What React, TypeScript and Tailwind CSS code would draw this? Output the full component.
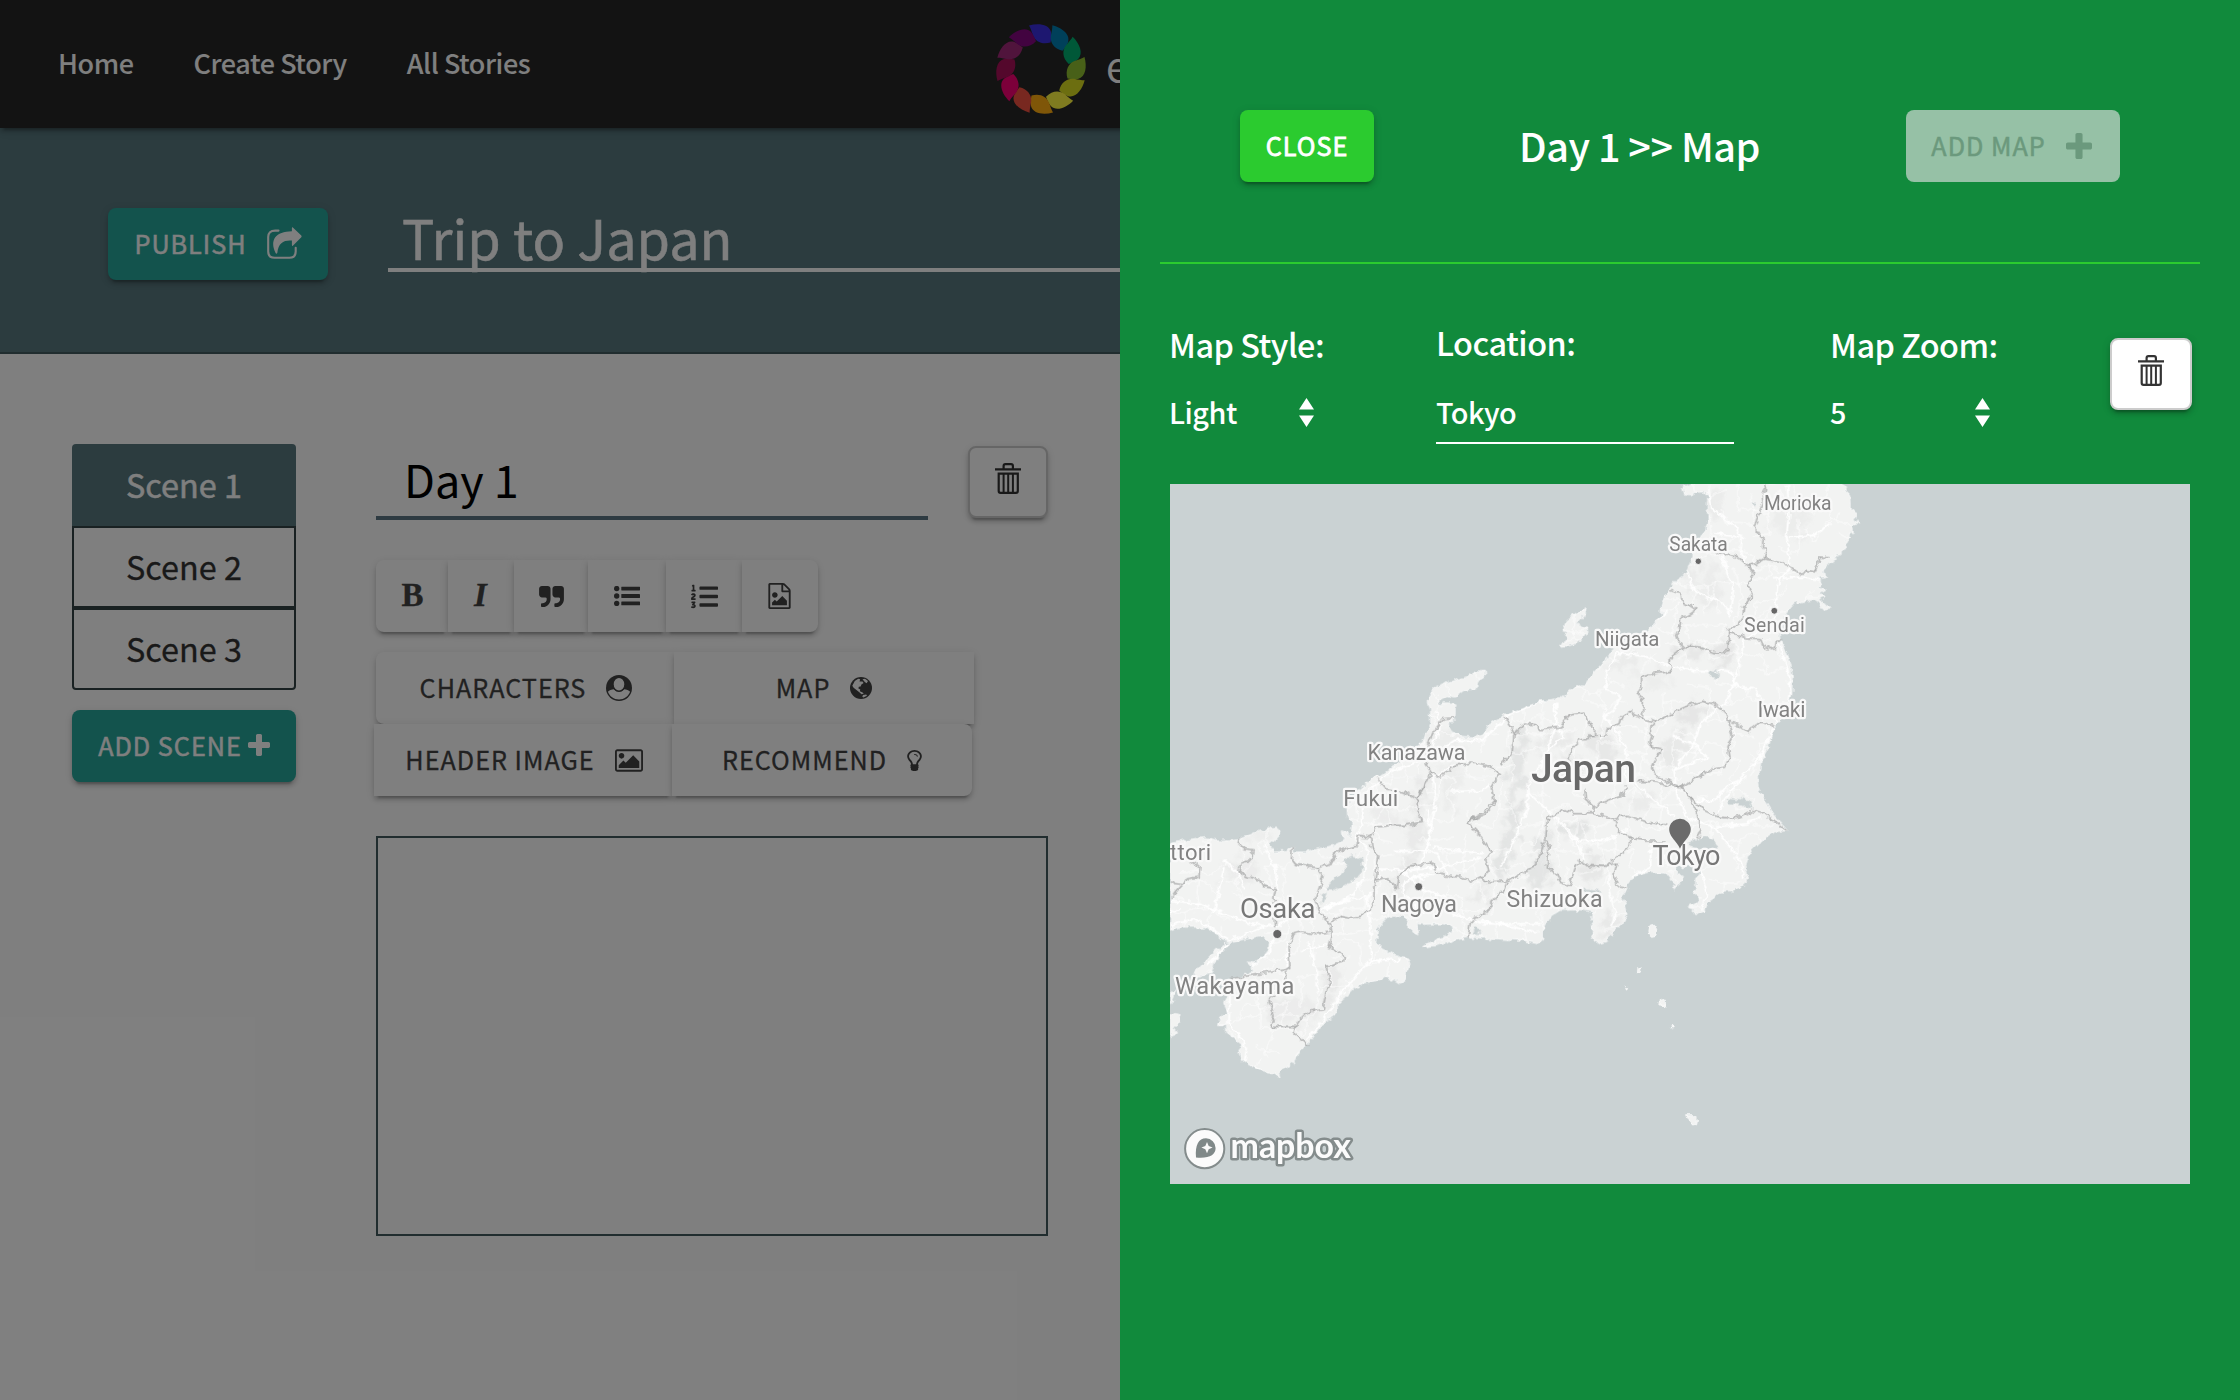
import React, { type ReactNode } from "react";
import { FaListOl } from "react-icons/fa";

/* ---------- icons ---------- */

type IconProps = { className?: string };

const ShareIcon = ({ className }: IconProps) => (
  <svg viewBox="0 0 35 32" className={className} fill="currentColor">
    <path d="M11.5 3.6H8.2Q1.2 3.6 1.2 10V24.6Q1.2 30.8 7.6 30.8H22.4Q28.7 30.8 28.7 24.6V20.8" fill="none" stroke="currentColor" strokeWidth="2.1" strokeLinecap="round" />
    <path d="M25.6.3 34.3 8.4Q35 9.3 34.3 10.2L25.6 18.9Q24.9 19 24.9 18V13.6C17 13 11.5 15.500 10.3 26Q9.300 27.400 8.600 26C2.500 13 8.500 4.600 24.900 4.300V1Q24.900 0 25.600 .3Z" />
  </svg>
);

const TrashIcon = ({ className }: IconProps) => (
  <svg viewBox="0 0 26 31" className={className} fill="none" stroke="currentColor" strokeWidth="2">
    <path d="M0 6.300H26M8.600 5.500V3Q8.600 1.200 10.400 1.200H16.100Q17.900 1.200 17.900 3V5.500" strokeWidth="2.200" />
    <path d="M3.700 10.700H22.800V28Q22.800 29.800 21 29.800H5.500Q3.700 29.800 3.700 28Z" strokeWidth="2.200" />
    <path d="M8.600 11V29.500M13.200 11V29.500M17.900 11V29.500" strokeWidth="2" />
  </svg>
);

const PlusIcon = ({ className }: IconProps) => (
  <svg viewBox="192 128 1408 1408" className={className} fill="currentColor">
    <path d="M1600 736v192q0 40-28 68t-68 28h-416v416q0 40-28 68t-68 28h-192q-40 0-68-28t-28-68v-416h-416q-40 0-68-28t-28-68v-192q0-40 28-68t68-28h416v-416q0-40 28-68t68-28h192q40 0 68 28t28 68v416h416q40 0 68 28t28 68z" />
  </svg>
);

const QuoteIcon = ({ className }: IconProps) => (
  <svg viewBox="64 128 1664 1408" className={className} fill="currentColor">
    <path d="M832 320v704q0 104-40.500 198.500t-109.500 163.500-163.500 109.500-198.500 40.500h-64q-26 0-45-19t-19-45v-128q0-26 19-45t45-19h64q106 0 181-75t75-181v-32q0-40-28-68t-68-28h-224q-80 0-136-56t-56-136v-384q0-80 56-136t136-56h384q80 0 136 56t56 136zm896 0v704q0 104-40.500 198.500t-109.500 163.500-163.500 109.500-198.500 40.500h-64q-26 0-45-19t-19-45v-128q0-26 19-45t45-19h64q106 0 181-75t75-181v-32q0-40-28-68t-68-28h-224q-80 0-136-56t-56-136v-384q0-80 56-136t136-56h384q80 0 136 56t56 136z" />
  </svg>
);

const ListIcon = ({ className }: IconProps) => (
  <svg viewBox="0 0 26 20" className={className} fill="currentColor">
    {[2.6, 10, 17.4].map((y) => (
      <g key={y}>
        <circle cx="2.7" cy={y} r="2.700" />
        <rect x="7.300" y={y - 1.9} width="18.700" height="3.800" rx=".4" />
      </g>
    ))}
  </svg>
);

const FileImageIcon = ({ className }: IconProps) => (
  <svg viewBox="128 0 1536 1792" className={className} fill="currentColor">
    <path d="M1596 380q28 28 48 76t20 88v1152q0 40-28 68t-68 28h-1344q-40 0-68-28t-28-68v-1600q0-40 28-68t68-28h896q40 0 88 20t76 48zm-444-244v376h376q-10-29-22-41l-313-313q-12-12-41-22zm384 1528v-1024h-416q-40 0-68-28t-28-68v-416h-768v1536h1280zm-128-448v320h-1024v-192l192-192 128 128 384-384zm-832-192q-80 0-136-56t-56-136 56-136 136-56 136 56 56 136-56 136-136 56z" />
  </svg>
);

const PictureIcon = ({ className }: IconProps) => (
  <svg viewBox="-64 128 1920 1536" className={className} fill="currentColor">
    <path d="M576 576q0 80-56 136t-136 56-136-56-56-136 56-136 136-56 136 56 56 136zm1024 384v448h-1408v-192l320-320 160 160 512-512zm96-704h-1600q-13 0-22.500 9.500t-9.500 22.500v1216q0 13 9.500 22.500t22.500 9.500h1600q13 0 22.500-9.500t9.500-22.500v-1216q0-13-9.500-22.500t-22.500-9.500zm160 32v1216q0 66-47 113t-113 47h-1600q-66 0-113-47t-47-113v-1216q0-66 47-113t113-47h1600q66 0 113 47t47 113z" />
  </svg>
);

const BulbIcon = ({ className }: IconProps) => (
  <svg viewBox="384 0 1024 1536" className={className} fill="currentColor">
    <path d="M1120 512q0 13-9.500 22.500t-22.500 9.500-22.500-9.500-9.500-22.500q0-46-54-71t-106-25q-13 0-22.500-9.500t-9.500-22.500 9.500-22.500 22.500-9.500q50 0 99.500 16t87 54 37.500 90zm160 0q0-72-34.500-134t-90-101.500-123-62-136.500-22.500-136.500 22.500-123 62-90 101.500-34.500 134q0 101 68 180 10 11 30.500 33t30.500 33q128 153 141 298h228q13-145 141-298 10-11 30.500-33t30.500-33q68-79 68-180zm128 0q0 155-103 268-45 49-74.500 87t-59.500 95.500-34 107.500q47 28 47 82 0 37-25 64 25 27 25 64 0 52-45 81 13 23 13 47 0 46-31.500 71t-77.500 25q-20 44-60 70t-87 26-87-26-60-70q-46 0-77.500-25t-31.500-71q0-24 13-47-45-29-45-81 0-37 25-64-25-27-25-64 0-54 47-82-4-50-34-107.500t-59.500-95.500-74.500-87q-103-113-103-268 0-99 44.500-184.500t117-142 164-89 186.500-32.500 186.500 32.500 164 89 117 142 44.500 184.500z" />
  </svg>
);

const PersonIcon = ({ className }: IconProps) => (
  <svg viewBox="0 0 26 26" className={className}>
    <circle cx="13" cy="13" r="13" fill="currentColor" />
    <path d="M1.900 16.800C3.200 15.200 5.500 14.500 8 14.200 10.500 17.200 15.500 17.200 18 14.200 20.500 14.500 22.800 15.200 24.100 16.800 22.600 21.300 18 24.500 13 24.500S3.400 21.300 1.900 16.800Z" fill="#fff" />
    <ellipse cx="13" cy="9.300" rx="6" ry="7" fill="#fff" stroke="currentColor" strokeWidth="1.400" />
  </svg>
);

const GlobeIcon = ({ className }: IconProps) => (
  <svg viewBox="0 0 22 22" className={className}>
    <circle cx="11" cy="11" r="11" fill="currentColor" />
    <path d="M4.800 3.900 8.200 1.700 10.200 2.300 9.500 4.400 12.500 4.500 13.600 5.900 11.400 7.600 10.600 9.400 8.800 9.700 8.400 11.600 10.300 12.600 9.800 14.200 12.200 15.300 13.800 16.600 11.600 17.300 9.600 15.400 6.800 13.300 3.600 10.700 2.300 8.800Z" fill="#fff" />
    <path d="M12.500 2.200 15 1.700 18 4 16.600 6.200 14.800 4.900ZM13 18 16.200 17.400 17 18.800 13.400 20.600 12.300 19.700Z" fill="#fff" />
  </svg>
);

const Arrows = () => (
  <svg viewBox="0 0 15 29" className="h-[29px] w-[15px]" fill="currentColor">
    <path d="M7.500 0 15 11.500H0ZM7.500 29 0 17.500H15Z" />
  </svg>
);

const PETALS = ["#3a2fe0", "#0080b4", "#00b070", "#90c030", "#d8dc20", "#fff640", "#ffac10", "#f05040", "#f80074", "#a81058", "#a02878", "#840680"];

const Logo = () => (
  <svg viewBox="-46 -46 92 92" className="h-[92px] w-[92px]">
    {PETALS.map((c, i) => (
      <path
        key={c}
        d="M-12-43.500C-3-46 8-45 10-37 10.700-33 10-29 9.500-26.500 1-24-5.500-27.500-8-33.500-9.500-38-10.500-41-12-43.500Z"
        fill={c}
        transform={`rotate(${i * 30})`}
      />
    ))}
  </svg>
);

/* ---------- controls ---------- */

const RAISED = "shadow-[0_4px_4px_rgba(0,0,0,0.14),0_2px_10px_rgba(0,0,0,0.12),0_6px_2px_-4px_rgba(0,0,0,0.2)]";

const Button = ({ className, children }: { className: string; children: ReactNode }) => (
  <button className={`flex h-[72px] items-center justify-center rounded-[8px] text-[25.2px] tracking-[1px] [-webkit-text-stroke:0.5px_currentColor] ${className}`}>
    {children}
  </button>
);

const Tool = ({ className, children }: { className: string; children: ReactNode }) => (
  <button className={`flex h-[72px] items-center justify-center bg-white text-[25.2px] tracking-[1px] text-[#424242] [-webkit-text-stroke:0.3px_currentColor] ${RAISED} ${className}`}>
    {children}
  </button>
);

/* ---------- map ---------- */

type Piece = { t: string; d: string };

// Each piece is drawn in the coordinate frame of its own map tile.
const NE = "translate(1540 470) scale(.33333)";
const NW = "translate(1160 470) scale(.45918 .33333)";
const SW = "translate(1160 780) scale(.33333)";
const SE = "translate(1400 780) scale(.33333)";

const LAND: Piece[] = [
  {
    t: NE,
    d: "M425 50 432 70 450 73 465 66 490 64 502 75 500 110 503 150 495 180 480 205 465 235 452 270 440 300 425 318 400 335 385 360 370 390 362 420 363 435 345 460 325 478 305 495 250 515 215 540 205 555 185 580 160 605 135 640 90 658 60 685 0 692-6 692-6 1388 8 1380 20 1358 30 1340 60 1320 120 1318 158 1325 155 1350 158 1380 148 1395 160 1412 175 1420 200 1413 215 1390 245 1360 262 1330 245 1275 258 1260 265 1230 290 1215 330 1203 375 1205 398 1235 400 1255 420 1238 432 1222 408 1208 405 1192 440 1185 475 1192 480 1210 465 1225 466 1250 458 1270 475 1285 465 1300 442 1310 460 1315 458 1328 475 1330 495 1320 500 1295 525 1280 540 1265 575 1263 600 1250 612 1240 620 1215 615 1190 620 1165 630 1140 650 1120 690 1090 710 1083 740 1081 700 1035 670 985 652 950 650 915 660 900 665 865 682 835 690 800 705 765 735 735 745 700 753 670 755 620 750 580 735 540 718 510 715 480 728 440 745 418 760 400 790 392 820 388 840 398 855 418 872 415 850 400 835 385 850 382 838 370 855 360 832 350 848 340 830 322 855 318 850 300 865 285 885 265 870 262 905 250 905 240 918 235 912 215 930 205 920 190 938 185 935 165 952 160 940 145 950 130 932 120 930 75 915 60 918 50 905 36 455 36Z",
  },
  { t: NE, d: "M133 412 105 430 75 455 68 480 85 485 60 528 85 525 115 515 145 475 128 470 108 460 130 435Z" },
  {
    t: NW,
    d: "M832 691 800 708 760 730 730 750 712 765 705 785 685 800 655 798 635 785 625 765 640 745 643 700 615 697 612 715 605 690 625 675 640 680 660 660 685 655 690 630 708 618 707 603 685 605 665 620 630 635 600 650 588 670 583 695 588 715 588 760 575 800 555 835 530 870 500 895 472 925 445 945 410 985 408 1030 420 1060 418 1080 415 1180H832Z",
  },
  {
    t: SW,
    d: "M30 190 80 178 130 172 180 180 240 175 290 155 345 140 358 152 350 170 325 190 340 212 385 210 395 200 400 215 440 215 475 205 520 195 550 180 545 155 560 148 565 172 582 150 575 125 562 110 560 80 600 30 640-10H1146V478L1130 490 1090 480 1010 475 925 470 880 480 830 495 785 500 800 490 850 470 878 450 875 435 845 430 790 432 765 428 775 460 760 455 742 430 735 410 720 405 685 405 665 425 650 450 648 490 670 510 700 525 735 535 745 550 735 575 732 600 715 608 700 598 675 590 650 600 610 608 580 625 550 655 530 665 530 690 515 710 490 725 470 750 450 780 430 795 410 825 400 845 365 868 350 890 345 878 300 870 260 850 240 835 235 810 248 795 210 765 195 755 195 735 170 735 180 710 205 700 192 670 200 650 215 625 200 600 240 590 280 570 260 545 285 548 310 525 325 505 328 480 300 465 250 477 210 487 185 478 150 448 125 440 60 440 30 450Z",
  },
  { t: SW, d: "M210 490 185 510 160 550 150 580 110 590 100 580 125 550 155 520 190 490Z" },
  { t: SW, d: "M30 640 48 625 40 650 30 670ZM30 700 52 705 56 722 38 745 48 758 30 765Z" },
  { t: SE, d: "M747 438 760 436 768 450 765 465 752 468 745 455ZM712 560 718 557 717 578 711 576ZM675 620 684 618 680 631ZM779 660 797 656 797 670 788 680 778 676ZM808 734 816 732 818 741 810 743ZM858 1003 872 1003 890 1018 888 1030 876 1034 864 1018Z" },
];

const LAKES: Piece[] = [
  { t: NE, d: "M505 600 525 598 535 612 528 628 510 622ZM562 985 600 990 612 978 625 995 636 1018 612 1008 600 1003 565 999ZM630 101 645 99 643 109ZM440 1118 470 1108 495 1096 525 1112 531 1130 520 1139 470 1136 450 1126Z" },
  { t: SW, d: "M545 240 575 225 605 235 608 270 590 290 560 310 520 330 500 330 505 310 545 275 560 255ZM485 345 502 333 490 365 480 367ZM945 440 962 450 950 465 938 455Z" },
  { t: SE, d: "M535 330 560 325 600 330 600 338 560 336Z" },
];

const BORDERS: Piece[] = [
  {
    t: NE,
    d: "M672 42 675 60 665 75 668 100 655 130 640 170 655 190 668 210 665 230 678 245 670 265M525 245 560 250 590 258 622 285 650 278 670 265 700 270 745 285 780 312 800 300 825 305 835 260 870 262M622 285 640 310 622 345 638 375 610 410 605 445 590 468 565 472 562 540 525 547 480 530 430 528 410 510 405 495 418 470 420 440 440 437 468 418 450 405 428 400 425 372 388 360M562 490 600 495 615 505 660 508 668 525 690 538 705 535 707 510 722 508M430 528 400 550 385 575 395 603 350 608 300 622 300 655 290 670 308 690 305 745 345 755 400 725 450 703 485 693 520 700 555 725 565 755 575 805 562 825 568 860 555 890 520 895 490 910 470 920 440 940 420 948 375 928 345 915 333 893 350 860 365 835 325 828 335 795 330 775 345 755M565 750 595 765 620 783 645 765 660 755 703 768M0 778 60 770 85 735 130 728 145 760 162 770 162 797 195 795 200 775 235 760 240 742 265 735 270 718 285 735 305 745M162 797 115 812 90 840 85 870M290 933 350 935 385 945 420 948 445 975 470 1030 475 1060 482 1090 470 1105M445 975 490 1020 530 1038 570 1045 605 1037 640 1020 670 1030 738 1080M135 955 138 990 160 1010 160 1030 100 1030 65 1013 50 1030 20 1042 18 1075 15 1110 25 1130 20 1190 45 1210 60 1235 85 1245 105 1190 115 1170 135 1185 190 1188 230 1178 220 1210 235 1250 260 1255M160 1010 190 995 250 970 260 945M160 1030 218 1045 260 1035 320 1055 380 1065M218 1045 235 1085 270 1100 310 1112 375 1112M270 1100 265 1130 210 1175",
  },
  {
    t: NW,
    d: "M640 742 615 745 592 790 580 830 578 880 590 905 605 920 640 885 680 878 720 890 740 910 720 950 728 1000 705 1035 668 1055M740 885 765 850 770 790 750 740M770 790 795 758 820 765 828 778M590 905 580 935 560 985M472 925 490 955 530 965 558 985",
  },
  {
    t: SW,
    d: "M240 172 235 190 250 205 278 208 272 240 240 248 232 272 265 290 300 300 310 318 345 325 340 350 345 440M395 200 392 235 405 252 470 263 510 248 530 212 590 195 592 165 630 170 648 140 690 135 730 135 785 125 770 85 770 55 785 20M630 170 635 205 655 225 648 265 640 320 640 370 610 405 575 412 540 405 510 430 480 400 465 355 488 285 470 263M640 300 675 292 710 325 715 290 745 258 810 245 830 275 870 288 900 290 930 300 965 290 975 305 1025 302 1036 310 1030 325 1000 355 980 395 930 420 922 472M965 290 985 270 975 240 992 215 965 170 920 125 965 100 1000 60M1036 305 1080 280 1120 260 1140 225 1150 185M510 430 515 470 505 500 548 525 545 545 500 555 508 605 495 640 488 685 455 690 420 715 405 738 330 738 340 705 325 660 345 645M510 455 470 460 420 455 400 460 385 500 388 560 375 568 300 580 210 595M375 568 375 600M405 738 400 760 440 795M30 305 70 310 80 295 115 290 118 260 90 240M30 355 50 330 70 310",
  },
];

const ROADS: Piece[] = [
  {
    t: NE,
    d: "M502 60 510 110 545 140 580 165 605 200 600 240 615 275M740 42 745 120 738 200 750 290 715 330 708 400 700 450 610 510 600 560 580 640 560 690 480 760 455 830 400 900 410 980 440 1040M440 300 455 350 490 380 545 395 570 430M715 515 740 590 750 670 735 740 700 770 660 860 600 920 550 990 530 1030M235 545 200 600 195 660 240 675 220 720 190 740 235 790 260 850 250 910 330 980 400 1040M235 545 320 560 385 585 460 600 570 605 590 650 640 655 720 770M300 500 350 450 380 420M45 700 45 760 70 800 20 840 0 900M60 1050 110 1110 190 1110 260 1080M110 1110 130 1170M520 1070 560 1120 600 1170 610 1220M480 1200 500 1270 480 1320M205 1210 205 1260 225 1330 210 1370M370 1150 380 1190M330 1120 330 1190 270 1220M700 325 790 320 845 330M600 200 520 190M745 200 820 195 870 160M545 250 560 310 580 350 565 440M470 990 520 990 570 940 620 920M440 1040 520 1070 620 1060 660 1040M400 800 460 820 500 860 400 900",
  },
  {
    t: NW,
    d: "M828 692 760 735 700 810 640 810 590 860 500 905 440 975 440 1060 420 1110M860 770 840 850 800 950 800 1010 770 1110 740 1190M590 910 600 1000 590 1060 580 1130 560 1200M800 970 860 1040 900 1110 960 1110M600 720 610 760 590 840M630 965 700 960 720 940M640 880 600 920M590 1130 700 1150",
  },
  {
    t: SW,
    d: "M30 360 120 370 190 400 270 430 340 440 420 400 470 400M30 435 100 415 210 480 330 430M190 240 235 280 250 330M310 190 345 270 350 330M585 170 620 200 610 290 570 350 480 385M490 385 560 360 640 340M620 350 630 470 630 540 580 590 530 660 440 780M630 540 720 540M720 270 780 320 850 350 880 400 970 430 1140 430M700 210 830 215 860 280M345 460 330 510 270 560 210 600 205 730 260 800 250 850 300 868M440 480 470 580 470 640M750 290 820 280M735 350 790 400M640 265 740 270 850 260 960 230M800 90 810 150 800 220M960 420 1130 455M380 480 380 560M30 400 60 380M160 400 190 260M140 560 200 490M420 510 500 490M790 300a40 40 0 1 0 4 60",
  },
];

// Deterministic mesh of minor roads, clipped to the land.
const minorRoads = (() => {
  let s = 7;
  const rnd = () => ((s = (s * 16807) % 2147483647) / 2147483647);
  const step = 15;
  const cols = 48;
  const rows = 42;
  const pts = Array.from({ length: rows }, (_, r) =>
    Array.from({ length: cols }, (_, c) => [1165 + c * step + (rnd() - 0.5) * 13, 478 + r * step + (rnd() - 0.5) * 13]),
  );
  let d = "";
  const link = (a: number[], b: number[]) => {
    const mx = (a[0] + b[0]) / 2 + (rnd() - 0.5) * 6;
    const my = (a[1] + b[1]) / 2 + (rnd() - 0.5) * 6;
    d += `M${a[0].toFixed(1)} ${a[1].toFixed(1)}Q${mx.toFixed(1)} ${my.toFixed(1)} ${b[0].toFixed(1)} ${b[1].toFixed(1)}`;
  };
  for (let r = 0; r < rows - 1; r++)
    for (let c = 0; c < cols - 1; c++) {
      if (rnd() < 0.45) link(pts[r][c], pts[r][c + 1]);
      if (rnd() < 0.45) link(pts[r][c], pts[r + 1][c]);
    }
  return d;
})();

const HILLS: [number, number, number, number, number, number][] = [
  [1418, 815, 7, 48, 12, 0.3], [1400, 880, 8, 30, 20, 0.25], [1517, 770, 7, 45, 8, 0.5], [1508, 840, 8, 40, 15, 0.5], [1540, 860, 9, 30, 10, 0.5],
  [1575, 830, 12, 9, 0, 0.5], [1590, 868, 10, 16, 10, 0.4], [1555, 742, 20, 9, -20, 0.3], [1600, 745, 18, 10, 10, 0.4], [1690, 715, 16, 9, -30, 0.45],
  [1672, 750, 14, 16, 0, 0.35], [1725, 655, 9, 14, 10, 0.45], [1690, 650, 20, 6, 0, 0.4], [1650, 680, 18, 10, 30, 0.2], [1710, 585, 9, 26, 10, 0.25],
  [1690, 575, 8, 20, 0, 0.25], [1715, 505, 12, 10, 0, 0.25], [1790, 520, 20, 16, 0, 0.2], [1620, 660, 16, 8, -30, 0.25], [1450, 785, 8, 30, 0, 0.2],
  [1330, 985, 8, 24, 10, 0.3], [1290, 1010, 24, 14, 0, 0.22], [1240, 870, 18, 12, 0, 0.22], [1385, 815, 16, 9, 20, 0.22], [1480, 895, 14, 8, -30, 0.3],
  [1610, 925, 8, 12, 10, 0.35], [1572, 768, 12, 12, 0, 0.3], [1640, 800, 14, 7, 0, 0.25], [1440, 740, 18, 10, 0, 0.2], [1255, 830, 12, 6, 0, 0.2],
];

type Label = { x: number; y: number; w: number; size: number; text: string; fill?: string; weight?: number };
const LABELS: Label[] = [
  { x: 1764, y: 510.3, w: 67.5, size: 19.3, text: "Morioka" },
  { x: 1669.3, y: 551, w: 58.5, size: 19.3, text: "Sakata" },
  { x: 1744, y: 632.4, w: 60.8, size: 19.8, text: "Sendai" },
  { x: 1595, y: 646.3, w: 64.5, size: 20.5, text: "Niigata" },
  { x: 1757.5, y: 717.3, w: 48, size: 21.5, text: "Iwaki" },
  { x: 1367.5, y: 760, w: 98, size: 21.5, text: "Kanazawa" },
  { x: 1343.3, y: 806, w: 55, size: 22.5, text: "Fukui" },
  { x: 1170, y: 860.3, w: 41, size: 22, text: "ttori" },
  { x: 1240, y: 918.4, w: 75.5, size: 27.5, text: "Osaka", fill: "#777" },
  { x: 1381, y: 912.4, w: 76, size: 23.3, text: "Nagoya" },
  { x: 1175, y: 993.7, w: 119.5, size: 23.7, text: "Wakayama" },
  { x: 1506.5, y: 907, w: 96, size: 23.2, text: "Shizuoka" },
  { x: 1652.5, y: 865.2, w: 68, size: 27, text: "Tokyo", fill: "#777" },
  { x: 1531, y: 781.7, w: 105, size: 39, text: "Japan", fill: "#686868", weight: 500 },
];

const DOTS = [
  [1698.3, 561.3, 3.2],
  [1774.3, 610.8, 3.4],
  [1418.7, 886.7, 4],
  [1277.3, 934, 4.5],
];

const draw = (pieces: Piece[]) =>
  pieces.map((p, i) => <path key={i} d={p.d} transform={p.t} vectorEffect="non-scaling-stroke" />);

const MapView = () => (
  <svg viewBox="1170 484 1020 700" className="h-[700px] w-[1020px] bg-[#cad2d3]" fill="none" strokeLinejoin="round">
    <defs>
      <clipPath id="land">{draw(LAND)}</clipPath>
      <filter id="rough" filterUnits="userSpaceOnUse" x="1150" y="470" width="1060" height="730">
        <feTurbulence type="fractalNoise" baseFrequency="0.16" numOctaves="2" seed="4" />
        <feDisplacementMap in="SourceGraphic" scale="7" xChannelSelector="R" yChannelSelector="G" />
      </filter>
      <filter id="soft" filterUnits="userSpaceOnUse" x="1150" y="470" width="1060" height="730">
        <feTurbulence type="fractalNoise" baseFrequency="0.09" numOctaves="3" seed="9" result="n" />
        <feDisplacementMap in="SourceGraphic" in2="n" scale="34" xChannelSelector="R" yChannelSelector="G" />
        <feGaussianBlur stdDeviation="1.6" />
      </filter>
    </defs>
    <g filter="url(#rough)" transform="translate(.6 .4)">
      <g fill="#f2f3f2" stroke="#f8f9f9" strokeWidth="1">{draw(LAND)}</g>
      <g clipPath="url(#land)">
        <g filter="url(#soft)" fill="#d6d7d7">
          {HILLS.map(([x, y, rx, ry, a, o]) => (
            <ellipse key={`${x}-${y}`} cx={x} cy={y} rx={rx} ry={ry} opacity={o} transform={`rotate(${a} ${x} ${y})`} />
          ))}
        </g>
        <path d={minorRoads} stroke="#fff" strokeWidth="1" opacity=".8" />
        <g stroke="#fff" strokeWidth="1.8">{draw(ROADS)}</g>
      </g>
      <g fill="#cad2d3">{draw(LAKES)}</g>
      <g stroke="#a8a9a9" strokeWidth="1.3">{draw(BORDERS)}</g>
    </g>
    {DOTS.map(([x, y, r]) => (
      <circle key={x} cx={x} cy={y} r={r} fill="#666" stroke="#fff" strokeWidth=".8" />
    ))}
    <g fontFamily="Roboto, sans-serif" stroke="#f9f9f9" strokeWidth="4.5" style={{ paintOrder: "stroke" }}>
      {LABELS.map((l) => (
        <text key={l.text} x={l.x} y={l.y} textLength={l.w} fontSize={l.size} fill={l.fill ?? "#828282"} fontWeight={l.weight ?? 400}>
          {l.text}
        </text>
      ))}
    </g>
    <path d="M1680 848.7C1677.5 842 1669.2 837 1669.2 829.3A10.8 10.5 0 0 1 1690.8 829.3C1690.8 837 1682.5 842 1680 848.7Z" fill="#6b6b6b" />
    <circle cx="1204.7" cy="1148.7" r="19.6" fill="#fbfbfb" stroke="#848c8c" strokeWidth="2" />
    <path d="M1196 1157.5C1195 1145 1198.5 1138.5 1206 1138.3A9.7 9.7 0 0 1 1215.6 1148C1215.6 1155 1209 1158.8 1196 1157.5Z" fill="#808989" />
    <path d="m1207 1142 1.700 3.900 3.900 1.700-3.900 1.700-1.700 3.900-1.700-3.900-3.900-1.700 3.900-1.700Z" fill="#fbfbfb" />
    <text x="1230.500" y="1158" textLength="120.500" lengthAdjust="spacingAndGlyphs" fontFamily="Lato, sans-serif" fontWeight="700" fontSize="34" fill="#fbfbfb" stroke="#848c8c" strokeWidth="5" strokeLinejoin="round" style={{ paintOrder: "stroke" }}>
      mapbox
    </text>
  </svg>
);

/* ---------- page ---------- */

const EditorPage = () => (
  <div className="h-[1400px] w-[2240px] bg-white">
    <nav className="relative flex h-[128px] items-center bg-[#262626] text-[27px] text-white shadow-[0_4px_4px_rgba(0,0,0,0.14),0_2px_10px_rgba(0,0,0,0.12),0_6px_2px_-4px_rgba(0,0,0,0.2)]">
      <div className="flex w-[995px] gap-[60px] pb-[2px] pl-[58px] font-medium tracking-[-0.45px]">
        <span>Home</span>
        <span>Create Story</span>
        <span>All Stories</span>
      </div>
      <div className="mt-[9px]">
        <Logo />
      </div>
      <span className="pl-[19px] pt-[1px] text-[40px]">e</span>
    </nav>

    <header className="flex h-[226px] items-start border-b-2 border-[#425a5e] bg-[#58787e] pl-[108px] pt-[80px]">
      <Button className={`w-[220px] gap-[20px] bg-[#26a69a] text-white ${RAISED}`}>
        PUBLISH
        <ShareIcon className="-mt-[3px] h-[32px] w-[35px]" />
      </Button>
      <div className="ml-[60px] h-[64px] w-[1400px] border-b-4 border-white pl-[14px] text-[54px] leading-[57px] text-white [-webkit-text-stroke:0.5px_currentColor]">
        Trip to Japan
      </div>
    </header>

    <div className="flex pl-[72px] pt-[90px]">
      <aside className="w-[224px] text-[32.4px]">
        <ul className="text-center text-[#333] [-webkit-text-stroke:0.3px_currentColor]">
          <li className="h-[82px] rounded-t-[4px] bg-[#58787e] leading-[80px] text-white [-webkit-text-stroke:0.5px_currentColor]">Scene 1</li>
          <li className="h-[82px] border-2 border-[#324245] leading-[76px]">Scene 2</li>
          <li className="h-[82px] rounded-b-[4px] border-2 border-[#324245] leading-[76px]">Scene 3</li>
        </ul>
        <Button className={`mt-[20px] w-[224px] gap-[6px] bg-[#26a69a] text-white ${RAISED}`}>
          ADD SCENE
          <PlusIcon className="-mt-[2px] h-[22px] w-[22px]" />
        </Button>
      </aside>

      <main className="ml-[80px] w-[672px]">
        <div className="flex h-[116px] items-start justify-between">
          <div className="h-[76px] w-[552px] border-b-4 border-[#5c7684] pl-[28px] text-[45px] leading-[69px] text-black">
            Day 1
          </div>
          <button className={`mt-[2px] flex h-[72px] w-[80px] justify-center rounded-[8px] border-2 border-[#ccc] bg-white pt-[15px] text-[#333] ${RAISED}`}>
            <TrashIcon className="h-[31px] w-[26px]" />
          </button>
        </div>

        <div className="flex">
          <Tool className="w-[72px] rounded-l-[8px] pl-[2px]"><span className="font-['Liberation_Serif'] text-[33px] font-bold">B</span></Tool>
          <Tool className="w-[66px]"><span className="font-['Liberation_Serif'] text-[33px] font-bold italic">I</span></Tool>
          <Tool className="w-[74px]"><QuoteIcon className="h-[21px] w-[25px]" /></Tool>
          <Tool className="w-[78px]"><ListIcon className="h-[20px] w-[26px]" /></Tool>
          <Tool className="w-[76px]"><FaListOl className="h-[27px] w-[27px]" /></Tool>
          <Tool className="w-[76px] rounded-r-[8px] pr-[2px]"><FileImageIcon className="h-[26px] w-[23px]" /></Tool>
        </div>

        <div className="mt-[20px] flex">
          <Tool className="w-[298px] gap-[20px] rounded-l-[8px] pl-[2px]">CHARACTERS<PersonIcon className="h-[26px] w-[26px]" /></Tool>
          <Tool className="w-[300px] gap-[20px]">MAP<GlobeIcon className="h-[22px] w-[22px]" /></Tool>
        </div>
        <div className="-ml-[2px] flex">
          <Tool className="w-[298px] gap-[20px] pl-[2px]">HEADER IMAGE<PictureIcon className="h-[23px] w-[28px]" /></Tool>
          <Tool className="w-[300px] gap-[20px] rounded-r-[8px]">RECOMMEND<BulbIcon className="h-[22px] w-[15px]" /></Tool>
        </div>

        <div className="mt-[40px] h-[400px] w-[672px] border-2 border-[#425a5e]" />
      </main>
    </div>
  </div>
);

const MapPanel = () => (
  <section className="absolute right-0 top-0 h-[1400px] w-[1120px] bg-[#118a3c] px-[40px] text-white">
    <div className="flex h-[264px] items-start justify-between border-b-2 border-[#2bcb2f] px-[80px] pt-[110px]">
      <Button className={`w-[134px] bg-[#2bcb2f] text-white [-webkit-text-stroke:0.8px_currentColor] ${RAISED}`}>CLOSE</Button>
      <h1 className="mr-[1px] text-[39.6px] font-medium leading-[69px] tracking-[-0.5px]">Day 1 &gt;&gt; Map</h1>
      <Button className="w-[214px] gap-[20px] bg-[#96c1a6] pr-[3px] text-[#6b997d]">
        ADD MAP
        <PlusIcon className="-mt-[1px] h-[26px] w-[26px]" />
      </Button>
    </div>

    <div className="flex h-[220px] items-start pl-[9px] text-[32.4px] font-medium tracking-[-0.5px]">
      <div className="w-[266px] pt-[56px]">
        <div className="leading-[48px]">Map Style:</div>
        <div className="mt-[20px] flex h-[48px] w-[145px] items-center justify-between text-[28.8px] leading-[48px]">
          <span>Light</span>
          <Arrows />
        </div>
      </div>
      <div className="w-[395px] pl-[1px] pt-[54px]">
        <div className="leading-[48px]">Location:</div>
        <div className="mt-[22px] h-[56px] w-[298px] border-b-2 border-white text-[28.8px] leading-[48px]">Tokyo</div>
      </div>
      <div className="w-[280px] pt-[56px]">
        <div className="leading-[48px]">Map Zoom:</div>
        <div className="mt-[20px] flex h-[48px] w-[160px] items-center justify-between text-[28.8px] leading-[48px]">
          <span>5</span>
          <Arrows />
        </div>
      </div>
      <button className={`mt-[74px] flex h-[72px] w-[82px] justify-center rounded-[8px] border-2 border-[#ccc] bg-white pt-[15px] text-[#333] ${RAISED}`}>
        <TrashIcon className="h-[31px] w-[26px]" />
      </button>
    </div>

    <div className="pl-[10px]">
      <MapView />
    </div>
  </section>
);

export default function App() {
  return (
    <div className="relative h-[1400px] w-[2240px] overflow-hidden font-['Noto_Sans_CJK_JP',sans-serif]">
      <EditorPage />
      <div className="absolute inset-0 bg-black/50" />
      <MapPanel />
    </div>
  );
}
